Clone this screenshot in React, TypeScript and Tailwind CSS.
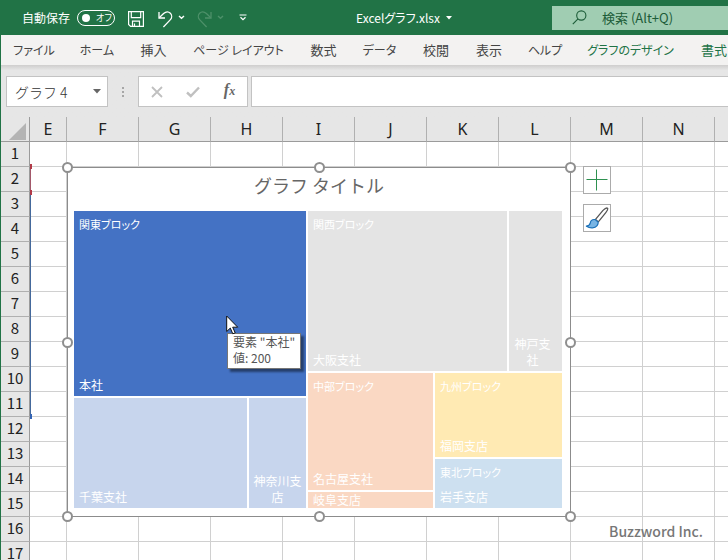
import type { ReactNode } from "react";
import { clsx } from "clsx";

/* ── Title bar ─────────────────────────────────────────────── */

function SaveIcon() {
  return (
    <svg viewBox="0 0 16 16" className="h-4 w-4" fill="none" stroke="#fff" strokeWidth="1.2" aria-hidden>
      <path d="M.6.6h14.8v14.8H2.6l-2-2z" />
      <path d="M3.3.8v5.9h9.4V.8M4.5 15.2v-5h7v5M6.5 15.2v-2.6" />
    </svg>
  );
}

function UndoIcon({ className }: { className?: string }) {
  return (
    <svg viewBox="0 0 15 17" className={className} fill="none" stroke="currentColor" strokeWidth="1.3" aria-hidden>
      <path d="M1 1V7H7" />
      <path d="M1.2 6.800 5.600 2.600C7.800.600 10.600.500 12.400 2.300 14.200 4.200 14 7 12.200 8.900L5.400 16" />
    </svg>
  );
}

function Chevron({ className }: { className?: string }) {
  return (
    <svg viewBox="0 0 7 5" className={className} fill="none" stroke="currentColor" strokeWidth="1.4" aria-hidden>
      <path d="M1 1l2.500 2.300L6 1" />
    </svg>
  );
}

function TitleBar() {
  return (
    <header className="flex h-[35px] shrink-0 items-center bg-[#217346] text-white">
      <label className="ml-[22px] flex shrink-0 items-center gap-[7px] text-xs">
        自動保存
        <input type="checkbox" role="switch" className="sr-only" />
        <span className="flex h-4 w-[38px] items-center gap-[6px] rounded-full border border-white pl-1 text-[9px] [font-feature-settings:'palt']">
          <span className="h-2 w-2 rounded-full bg-white" />
          <span aria-hidden>オフ</span>
        </span>
      </label>
      <button aria-label="上書き保存" className="mt-[3px] ml-[13px] shrink-0"><SaveIcon /></button>
      <button aria-label="元に戻す" className="mt-[3px] ml-3.5 flex shrink-0 items-center gap-[5px]">
        <UndoIcon className="h-[17px] w-[15px]" />
        <Chevron className="-mt-[3px] h-[5px] w-[7px]" />
      </button>
      <button aria-label="やり直し" disabled className="mt-[3px] ml-3 flex shrink-0 items-center gap-[5px] text-[#4d9069]">
        <UndoIcon className="h-[17px] w-[15px] -scale-x-100" />
        <Chevron className="-mt-[3px] h-[5px] w-[7px]" />
      </button>
      <button aria-label="クイック アクセス ツール バーのユーザー設定" className="ml-[15px] shrink-0">
        <svg viewBox="0 0 8 7" className="h-[7px] w-2" fill="none" stroke="#fff" strokeWidth="1.2" aria-hidden>
          <path d="M.5 1h7M1.500 3.200 4 5.600 6.500 3.200" />
        </svg>
      </button>
      <button className="ml-[109px] flex shrink-0 items-center gap-1.5 text-xs [font-feature-settings:'palt']">
        Excelグラフ.xlsx
        <svg viewBox="0 0 6 4" className="h-1 w-1.5" fill="#fff" aria-hidden><path d="M0 0h6L3 3.500z" /></svg>
      </button>
      <label className="ml-auto flex h-6 w-44 shrink-0 items-center gap-[15px] bg-[#a0cdb2] pl-5 text-[#1c5c38]">
        <svg viewBox="0 0 15 15" className="h-[15px] w-[15px] shrink-0" fill="none" stroke="currentColor" strokeWidth="1.1" aria-hidden>
          <circle cx="9.300" cy="5.500" r="4.600" />
          <path d="M6 8.900.8 14.200" />
        </svg>
        <input
          aria-label="検索"
          placeholder="検索 (Alt+Q)"
          className="w-full min-w-0 bg-transparent text-[13px] outline-none placeholder:text-[#1c5c38]"
        />
      </label>
    </header>
  );
}

/* ── Ribbon tabs ───────────────────────────────────────────── */

const TABS = [
  { label: "ファイル", size: "w-[66px] text-xs" },
  { label: "ホーム", size: "w-[60px] text-xs" },
  { label: "挿入", size: "w-[53px] text-[13px]" },
  { label: "ページ レイアウト", size: "w-[117px] text-xs" },
  { label: "数式", size: "w-[53px] text-[13px]" },
  { label: "データ", size: "w-[59px] text-xs" },
  { label: "校閲", size: "w-[54px] text-[13px]" },
  { label: "表示", size: "w-[52px] text-[13px]" },
  { label: "ヘルプ", size: "w-[60px] text-xs" },
  { label: "グラフのデザイン", size: "w-[111px] text-xs", contextual: true },
  { label: "書式", size: "w-[56px] text-[13px]", contextual: true },
];

function RibbonTabs() {
  return (
    <nav className="flex h-[30px] shrink-0 border-l border-[#217346] bg-[#f3f2f1]">
      {TABS.map((t) => (
        <button
          key={t.label}
          className={clsx(
            "shrink-0 text-center whitespace-nowrap [font-feature-settings:'palt']",
            t.size,
            t.contextual ? "text-[#217346]" : "text-[#444]",
          )}
        >
          {t.label}
        </button>
      ))}
    </nav>
  );
}

/* ── Formula bar ───────────────────────────────────────────── */

function FormulaBar() {
  return (
    <div className="flex h-[52px] shrink-0 border-l border-[#217346] bg-linear-to-b from-[#cfcecd] to-[#e6e6e6] to-10% pt-[11px] pl-[5px]">
      <div className="flex h-[31px] w-[102px] shrink-0 items-center border border-[#c3c3c3] bg-white">
        <input
          aria-label="名前ボックス"
          defaultValue="グラフ 4"
          className="w-full min-w-0 pl-2 text-sm font-light text-[#333] outline-none"
        />
        <button aria-label="名前の一覧" className="shrink-0 pr-1.5">
          <svg viewBox="0 0 8 5" className="h-[5px] w-2" fill="#666" aria-hidden><path d="M0 0h8L4 4.500z" /></svg>
        </button>
      </div>
      <div className="flex h-[31px] w-[30px] shrink-0 flex-col items-center justify-center gap-0.5">
        <span className="h-0.5 w-0.5 bg-[#a6a6a6]" />
        <span className="h-0.5 w-0.5 bg-[#a6a6a6]" />
        <span className="h-0.5 w-0.5 bg-[#a6a6a6]" />
      </div>
      <div className="flex h-[31px] w-[110px] shrink-0 items-center justify-around border border-[#c3c3c3] bg-white">
        <button aria-label="キャンセル">
          <svg viewBox="0 0 12 12" className="h-3 w-3" fill="none" stroke="#c0c0c0" strokeWidth="1.8" aria-hidden>
            <path d="M1 1l10 10M11 1 1 11" />
          </svg>
        </button>
        <button aria-label="入力">
          <svg viewBox="0 0 14 12" className="h-3 w-3.5" fill="none" stroke="#c0c0c0" strokeWidth="2.400" aria-hidden>
            <path d="M1 6.500 4.800 10 13 1.500" />
          </svg>
        </button>
        <button aria-label="関数の挿入" className="pb-0.5 font-['Liberation_Serif',serif] text-base leading-4 font-bold text-[#666] italic">
          f<span className="text-xs">x</span>
        </button>
      </div>
      <input aria-label="数式バー" className="ml-[3px] h-[31px] min-w-0 flex-1 border border-r-0 border-[#c3c3c3] bg-white outline-none" />
    </div>
  );
}

/* ── Sheet grid ────────────────────────────────────────────── */

const COLUMNS = ["E", "F", "G", "H", "I", "J", "K", "L", "M", "N", ""];
const ROWS = Array.from({ length: 17 }, (_, i) => i + 1);

function SheetGrid() {
  return (
    <table className="w-full table-fixed border-separate border-spacing-0">
      <colgroup>
        <col className="w-[29px]" />
        <col className="w-[37px]" />
        {COLUMNS.slice(1, -1).map((c) => (
          <col key={c} className="w-[72px]" />
        ))}
        <col />
      </colgroup>
      <thead>
        <tr className="h-[25px] bg-[#e6e6e6]">
          <th className="border-r border-b border-[#9b9b9b] p-0">
            <svg viewBox="0 0 17 17" className="mt-1 ml-2 h-[17px] w-[17px]" fill="#b4b4b4" aria-hidden><path d="M17 0v17H0z" /></svg>
          </th>
          {COLUMNS.map((c, i) => (
            <th
              key={i}
              className="border-r border-b border-[#9b9b9b] p-0 font-['Noto_Sans','Noto_Sans_CJK_JP',sans-serif] text-base leading-6 font-normal text-[#222] [border-right-color:#b0b0b0] last:border-r-0"
            >
              {c}
            </th>
          ))}
        </tr>
      </thead>
      <tbody>
        {ROWS.map((r) => (
          <tr key={r} className="h-[25px]">
            <th className="border-r border-b border-[#9b9b9b] bg-[#e6e6e6] p-0 align-top text-[15px] leading-[22px] font-normal text-[#222] [border-bottom-color:#b0b0b0]">
              {r}
            </th>
            {COLUMNS.map((_, i) => (
              <td key={i} className="border-r border-b border-[#d0d0d0] bg-white p-0 last:border-r-0" />
            ))}
          </tr>
        ))}
      </tbody>
    </table>
  );
}

/* Coloured range markers along the left edge of column E */
function RangeMarkers() {
  return (
    <div className="absolute top-[47px] left-[29px] flex w-0.5 flex-col">
      <span className="h-[5px] w-0.5 bg-[#b23a48]" />
      <span className="h-[21px] w-px bg-[#a3586a]" />
      <span className="h-[5px] w-0.5 bg-[#b23a48]" />
      <span className="h-[219px] w-px bg-[#44699c]" />
      <span className="h-[5px] w-0.5 bg-[#3565b5]" />
    </div>
  );
}

/* ── Treemap chart ─────────────────────────────────────────── */

type TileProps = { label: string; group?: string; className: string; narrow?: boolean; flat?: boolean };

function Tile({ label, group, className, narrow, flat }: TileProps) {
  return (
    <div
      className={clsx(
        "flex shrink-0 flex-col overflow-hidden text-xs leading-4 text-white [font-feature-settings:'palt']",
        narrow ? "px-1 text-center" : "px-[5px]",
        className,
      )}
    >
      {group && <span className="mt-[5px] text-[11px]">{group}</span>}
      <span className={clsx("mt-auto", !flat && "mb-[3px]")}>{label}</span>
    </div>
  );
}

function Treemap() {
  return (
    <div className="flex h-[297px] w-[488px] gap-0.5">
      <div className="flex w-[232px] flex-col gap-0.5">
        <Tile group="関東ブロック" label="本社" className="h-[185px] bg-[#4472c4]" />
        <div className="flex flex-1 gap-0.5">
          <Tile label="千葉支社" className="w-[173px] bg-[#c7d5ed]" />
          <Tile label="神奈川支店" className="flex-1 bg-[#c7d5ed]" narrow />
        </div>
      </div>
      <div className="flex flex-1 flex-col gap-0.5">
        <div className="flex h-40 shrink-0 gap-0.5">
          <Tile group="関西ブロック" label="大阪支社" className="w-[199px] bg-[#e4e4e4]" />
          <Tile label="神戸支社" className="flex-1 bg-[#e4e4e4] pr-2.5" narrow />
        </div>
        <div className="flex min-h-0 flex-1 gap-0.5">
          <div className="flex w-[125px] flex-col gap-0.5">
            <Tile group="中部ブロック" label="名古屋支社" className="h-[117px] bg-[#fad8c3]" />
            <Tile label="岐阜支店" className="h-4 bg-[#fad8c3]" flat />
          </div>
          <div className="flex flex-1 flex-col gap-0.5">
            <Tile group="九州ブロック" label="福岡支店" className="h-[84px] bg-[#ffeab3]" />
            <Tile group="東北ブロック" label="岩手支店" className="flex-1 bg-[#cde0f0]" />
          </div>
        </div>
      </div>
    </div>
  );
}

const HANDLES = [
  "top-0 left-0",
  "top-0 inset-x-0 mx-auto",
  "top-0 right-0",
  "inset-y-0 my-auto left-0",
  "inset-y-0 my-auto right-0",
  "bottom-0 left-0",
  "bottom-0 inset-x-0 mx-auto",
  "bottom-0 right-0",
];

function Chart() {
  return (
    <section className="absolute top-[50px] left-[66px] w-[504px] bg-white px-[7px] pb-[9px] ring-1 ring-[#8c8c8c] ring-inset">
      <h2 className="pt-1 pb-3 text-center text-lg leading-7 text-[#666]">グラフ タイトル</h2>
      <Treemap />
      <div className="absolute -inset-[5px]">
        {HANDLES.map((h) => (
          <span key={h} className={clsx("absolute h-[11px] w-[11px] rounded-full border-2 border-[#8f8f8f] bg-white", h)} />
        ))}
      </div>
    </section>
  );
}

function ChartButton({ label, children }: { label: string; children: ReactNode }) {
  return (
    <button aria-label={label} className="flex h-7 w-7 items-center justify-center border border-[#ababab] bg-white">
      {children}
    </button>
  );
}

function ChartButtons() {
  return (
    <div className="absolute top-[49px] left-[582px] flex flex-col gap-2.5">
      <ChartButton label="グラフ要素">
        <svg viewBox="0 0 22 22" className="h-[22px] w-[22px]" stroke="#2e9150" strokeWidth="1" aria-hidden>
          <path d="M10.500.5v21M.5 10.500h21" />
        </svg>
      </ChartButton>
      <ChartButton label="グラフ スタイル">
        <svg viewBox="0 0 24 24" className="h-6 w-6" strokeLinejoin="round" aria-hidden>
          <path d="M22.600 2.200c-1.400-.8-3.200.8-4.600 2.200l-7.500 9 2.800 2.500 7.500-9.200c1.200-1.500 2.400-3.400 1.800-4.500z" fill="#fff" stroke="#555" strokeWidth="1.3" />
          <path d="M10.200 13.600c-2.500-.4-4.400.8-4.900 3.200-.4 1.900-1.600 3-3.900 3.400 3.700 2.400 8.600 2.200 10.700-.6 1-1.300 1.200-2.500 1-3.600z" fill="#79b5e4" stroke="#1c71b8" strokeWidth="1.2" />
        </svg>
      </ChartButton>
    </div>
  );
}

function Tooltip() {
  return (
    <>
      <div
        role="tooltip"
        className="absolute top-[216px] left-[226px] border border-[#767676] bg-white px-[5px] pb-0.5 text-xs leading-4 whitespace-nowrap text-[#555] shadow-[3px_3px_2px_rgba(0,0,0,0.45)]"
      >
        <p>要素 "本社"</p>
        <p>値: 200</p>
      </div>
      <svg viewBox="0 0 13 20" className="absolute top-[198px] left-[225px] h-5 w-[13px]" aria-hidden>
        <path d="M.7 1v15.500l3.600-3.400 2.500 5.700 2.400-1-2.500-5.600h5z" fill="#fff" stroke="#111" />
      </svg>
    </>
  );
}

export default function App() {
  return (
    <div className="flex h-screen flex-col overflow-hidden bg-white font-['Noto_Sans_CJK_JP',sans-serif]">
      <TitleBar />
      <RibbonTabs />
      <FormulaBar />
      <main className="relative min-h-0 flex-1 overflow-hidden border-l border-[#217346]">
        <SheetGrid />
        <RangeMarkers />
        <Chart />
        <ChartButtons />
        <Tooltip />
        <p className="absolute right-[25px] bottom-[19px] text-sm leading-5 font-medium text-[#777]">Buzzword Inc.</p>
      </main>
    </div>
  );
}
